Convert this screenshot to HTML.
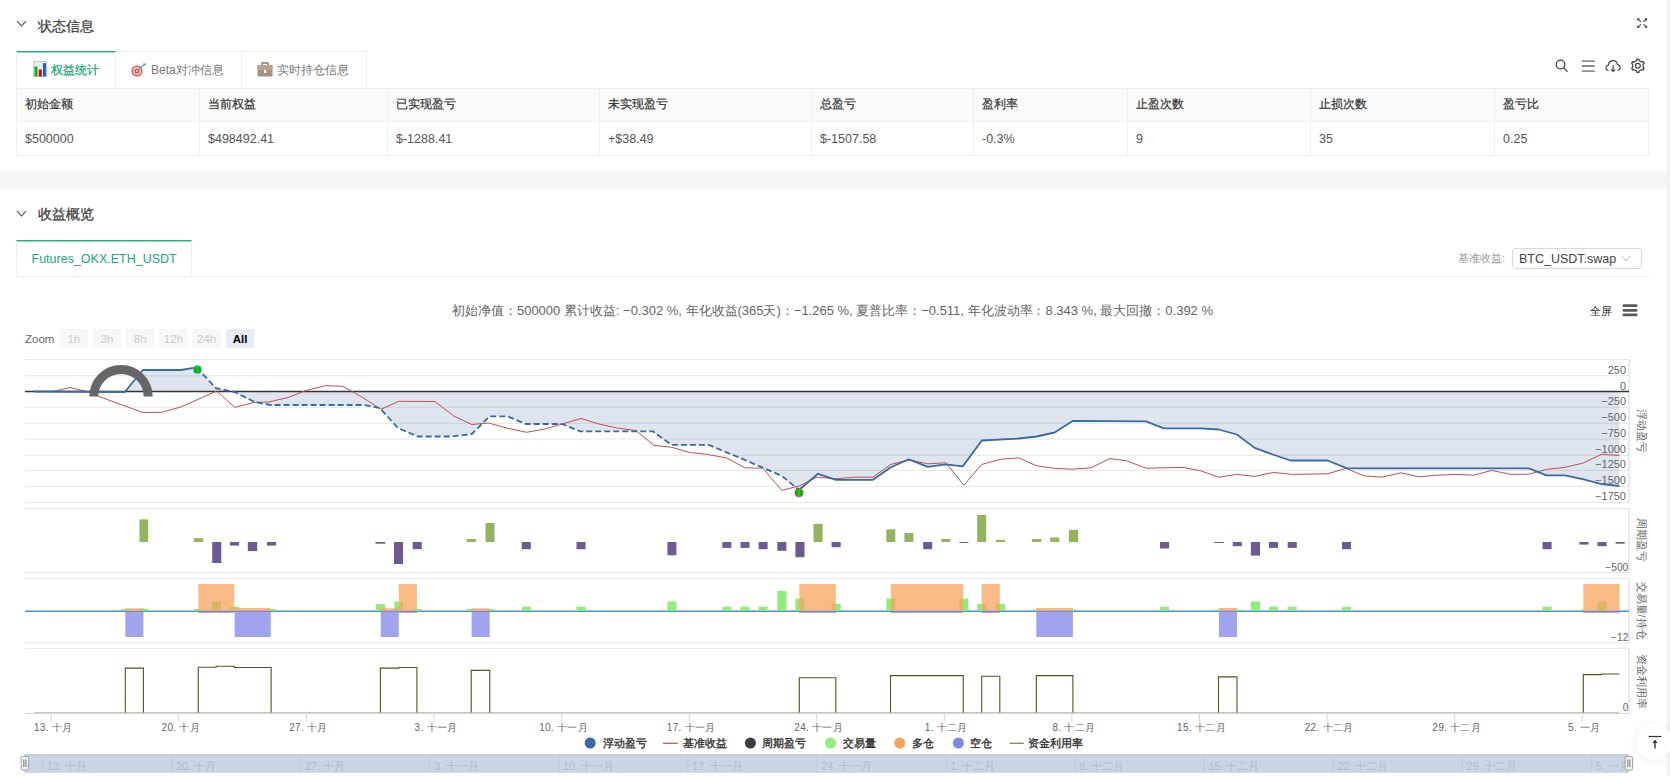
<!DOCTYPE html>
<html><head><meta charset="utf-8">
<style>
html,body{margin:0;padding:0;width:1670px;height:776px;overflow:hidden;background:#f4f5f7;font-family:"Liberation Sans", sans-serif;}
.abs{position:absolute;}
.t{position:absolute;white-space:nowrap;line-height:1;}
</style></head><body>
<div class="abs" style="left:0;top:0;width:1667px;height:171px;background:#fff"></div>
<div class="abs" style="left:0;top:189px;width:1667px;height:587px;background:#fff"></div>
<div class="abs" style="left:1667px;top:0;width:3px;height:776px;background:#f1f2f4"></div>

<svg class="abs" style="left:16px;top:20px" width="12" height="8" viewBox="0 0 12 8"><path d="M1 1.2 L5.5 6 L10 1.2" fill="none" stroke="#555" stroke-width="1.1"/></svg>
<div class="t" style="left:38px;top:19px;font-size:14px;color:#444;font-weight:normal;-webkit-text-stroke:0.3px #444">状态信息</div>
<svg class="abs" style="left:1634px;top:15px" width="16" height="16" viewBox="0 0 16 16">
<g stroke="#444" stroke-width="1.1" fill="none" stroke-linecap="round">
<path d="M4 4 L6.6 6.6"/><path d="M12.4 4 L9.8 6.6"/><path d="M4 12.2 L6.6 9.6"/><path d="M12.4 12.2 L9.8 9.6"/>
</g>
<g fill="#444"><path d="M3.2 3.3 L6 3.5 L3.4 6.1 Z"/><path d="M13.2 3.3 L10.4 3.5 L13 6.1 Z"/><path d="M3.2 13 L6 12.8 L3.4 10.2 Z"/><path d="M13.2 13 L10.4 12.8 L13 10.2 Z"/></g>
</svg>
<div class="abs" style="left:16px;top:51px;width:100px;height:37px;box-sizing:border-box;border-top:1px solid #1fae82;border-left:1px solid #f0f0f0;border-right:1px solid #f0f0f0;background:#fff;box-shadow:inset 0 1px 0 rgba(31,174,130,0.45)"></div>
<div class="abs" style="left:116px;top:51px;width:126px;height:37px;box-sizing:border-box;border:1px solid #f0f0f0;border-left:none;border-bottom:none;background:#fff"></div>
<div class="abs" style="left:242px;top:51px;width:125px;height:37px;box-sizing:border-box;border:1px solid #f0f0f0;border-left:none;border-bottom:none;background:#fff"></div>
<svg class="abs" style="left:33px;top:61px" width="14" height="16" viewBox="0 0 14 16">
<rect x="0.5" y="0.5" width="13" height="15" fill="#e6ecf2" stroke="#b9d6cf" stroke-width="1"/>
<rect x="1.5" y="5.5" width="3" height="10" fill="#11b311"/>
<rect x="5.8" y="8.5" width="3" height="7" fill="#c40a0a"/>
<rect x="10" y="2.2" width="3" height="13.3" fill="#1f5fd0"/>
</svg>
<div class="t" style="left:51px;top:64px;font-size:12px;color:#1aa77a;-webkit-text-stroke:0.25px #1aa77a">权益统计</div>
<svg class="abs" style="left:131px;top:63px" width="16" height="14" viewBox="0 0 16 14">
<circle cx="6" cy="8" r="5.6" fill="#e05c50"/><circle cx="6" cy="8" r="4" fill="#f3d6d0"/><circle cx="6" cy="8" r="2.6" fill="#e05c50"/><circle cx="6" cy="8" r="1.1" fill="#f3d6d0"/>
<path d="M6 8 L13.5 1.5" stroke="#5aa7c0" stroke-width="1.5"/><path d="M12 0.5 L15.5 0.5 L14 3 Z" fill="#5aa7c0"/>
</svg>
<div class="t" style="left:151px;top:64px;font-size:12px;color:#777">Beta对冲信息</div>
<svg class="abs" style="left:257px;top:62px" width="16" height="15" viewBox="0 0 16 15">
<path d="M5 3 L5 1 L11 1 L11 3" fill="none" stroke="#8a7565" stroke-width="1.4"/>
<rect x="0.5" y="3" width="15" height="11.5" rx="1.2" fill="#a89080"/>
<rect x="0.5" y="3" width="15" height="5" rx="1" fill="#b8a292"/>
<rect x="7" y="8" width="2.2" height="3" fill="#fff"/>
</svg>
<div class="t" style="left:277px;top:64px;font-size:12px;color:#777">实时持仓信息</div>
<svg class="abs" style="left:1550px;top:55px" width="100" height="22" viewBox="1550 55 100 22">
<g fill="none" stroke="#444" stroke-width="1.25">
<circle cx="1560.5" cy="64.5" r="4.3"/><path d="M1563.7 67.7 L1567.6 71.9"/>
</g>
<g stroke="#666" stroke-width="1.4"><path d="M1581.8 61.1 H1594.8 M1581.8 66 H1594.8 M1581.8 71.1 H1594.8"/></g>
<g fill="none" stroke="#444" stroke-width="1.2">
<path d="M1608.5 70.5 C1606.5 70.3 1605.8 68.8 1606 67.5 C1606.3 66 1607.6 65.2 1608.4 65.1 C1608.8 62.2 1610.8 60.7 1613 60.7 C1615.4 60.7 1617 62.3 1617.6 64.6 C1619.3 64.9 1620.2 66.3 1620.1 67.8 C1620 69.3 1619 70.4 1617.6 70.5"/>
<path d="M1613.1 65.3 V71.3"/><path d="M1611.1 69.3 L1613.1 71.4 L1615.1 69.3"/>
</g>
<g fill="none" stroke="#444" stroke-width="1.2">
<path d="M1635.25 61.21 L1636.71 60.64 L1636.85 59.18 L1638.95 59.18 L1639.09 60.64 L1640.55 61.21 L1641.78 62.19 L1643.11 61.58 L1644.15 63.40 L1642.97 64.25 L1643.20 65.80 L1642.97 67.35 L1644.15 68.20 L1643.11 70.02 L1641.78 69.41 L1640.55 70.39 L1639.09 70.96 L1638.95 72.42 L1636.85 72.42 L1636.71 70.96 L1635.25 70.39 L1634.02 69.41 L1632.69 70.02 L1631.65 68.20 L1632.83 67.35 L1632.60 65.80 L1632.83 64.25 L1631.65 63.40 L1632.69 61.58 L1634.02 62.19 Z" stroke-linejoin="round"/>
<circle cx="1637.9" cy="65.8" r="2.4"/>
</g>
</svg>
<div class="abs" style="left:16px;top:88px;width:1632px;height:33px;background:#fafafa"></div>
<div class="abs" style="left:16px;top:88px;width:1633px;height:68px;box-sizing:border-box;border:1px solid #f0f0f0"></div>
<div class="abs" style="left:16px;top:121px;width:1632px;height:1px;background:#f0f0f0"></div>
<div class="abs" style="left:199px;top:88px;width:1px;height:67px;background:#f0f0f0"></div>
<div class="abs" style="left:387px;top:88px;width:1px;height:67px;background:#f0f0f0"></div>
<div class="abs" style="left:599px;top:88px;width:1px;height:67px;background:#f0f0f0"></div>
<div class="abs" style="left:811px;top:88px;width:1px;height:67px;background:#f0f0f0"></div>
<div class="abs" style="left:973px;top:88px;width:1px;height:67px;background:#f0f0f0"></div>
<div class="abs" style="left:1127px;top:88px;width:1px;height:67px;background:#f0f0f0"></div>
<div class="abs" style="left:1310px;top:88px;width:1px;height:67px;background:#f0f0f0"></div>
<div class="abs" style="left:1494px;top:88px;width:1px;height:67px;background:#f0f0f0"></div>
<div class="t" style="left:25px;top:99px;font-size:11.5px;color:#333;-webkit-text-stroke:0.2px #333">初始金额</div>
<div class="t" style="left:25px;top:133px;font-size:12.5px;color:#555">$500000</div>
<div class="t" style="left:208px;top:99px;font-size:11.5px;color:#333;-webkit-text-stroke:0.2px #333">当前权益</div>
<div class="t" style="left:208px;top:133px;font-size:12.5px;color:#555">$498492.41</div>
<div class="t" style="left:396px;top:99px;font-size:11.5px;color:#333;-webkit-text-stroke:0.2px #333">已实现盈亏</div>
<div class="t" style="left:396px;top:133px;font-size:12.5px;color:#555">$-1288.41</div>
<div class="t" style="left:608px;top:99px;font-size:11.5px;color:#333;-webkit-text-stroke:0.2px #333">未实现盈亏</div>
<div class="t" style="left:608px;top:133px;font-size:12.5px;color:#555">+$38.49</div>
<div class="t" style="left:820px;top:99px;font-size:11.5px;color:#333;-webkit-text-stroke:0.2px #333">总盈亏</div>
<div class="t" style="left:820px;top:133px;font-size:12.5px;color:#555">$-1507.58</div>
<div class="t" style="left:982px;top:99px;font-size:11.5px;color:#333;-webkit-text-stroke:0.2px #333">盈利率</div>
<div class="t" style="left:982px;top:133px;font-size:12.5px;color:#555">-0.3%</div>
<div class="t" style="left:1136px;top:99px;font-size:11.5px;color:#333;-webkit-text-stroke:0.2px #333">止盈次数</div>
<div class="t" style="left:1136px;top:133px;font-size:12.5px;color:#555">9</div>
<div class="t" style="left:1319px;top:99px;font-size:11.5px;color:#333;-webkit-text-stroke:0.2px #333">止损次数</div>
<div class="t" style="left:1319px;top:133px;font-size:12.5px;color:#555">35</div>
<div class="t" style="left:1503px;top:99px;font-size:11.5px;color:#333;-webkit-text-stroke:0.2px #333">盈亏比</div>
<div class="t" style="left:1503px;top:133px;font-size:12.5px;color:#555">0.25</div>
<svg class="abs" style="left:16px;top:210px" width="12" height="8" viewBox="0 0 12 8"><path d="M1 1.2 L5.5 6 L10 1.2" fill="none" stroke="#555" stroke-width="1.1"/></svg>
<div class="t" style="left:38px;top:207px;font-size:14px;color:#444;font-weight:normal;-webkit-text-stroke:0.3px #444">收益概览</div>
<div class="abs" style="left:16px;top:240px;width:176px;height:37px;box-sizing:border-box;border-top:1px solid #1fae82;border-left:1px solid #f0f0f0;border-right:1px solid #f0f0f0;background:#fff;box-shadow:inset 0 1px 0 rgba(31,174,130,0.45)"></div>
<div class="abs" style="left:16px;top:276px;width:1633px;height:1px;background:#f0f0f0"></div>
<div class="t" style="left:31.5px;top:253px;font-size:12.5px;color:#1aa77a">Futures_OKX.ETH_USDT</div>
<div class="t" style="left:1458px;top:253px;font-size:11px;color:#999">基准收益:</div>
<div class="abs" style="left:1512px;top:248px;width:130px;height:21px;box-sizing:border-box;border:1px solid #d9d9d9;border-radius:3px;background:#fff"></div>
<div class="t" style="left:1519px;top:253px;font-size:12.5px;color:#444">BTC_USDT.swap</div>
<svg class="abs" style="left:1621px;top:255px" width="11" height="8" viewBox="0 0 11 8"><path d="M0.8 0.8 L5 6 L9.4 0.8" fill="none" stroke="#bbb" stroke-width="1"/></svg>
<svg class="abs" style="left:0;top:0" width="1670" height="776" viewBox="0 0 1670 776">
<text x="452" y="314.5" textLength="761" lengthAdjust="spacing" font-family='"Liberation Sans", sans-serif' font-size="13" fill="#666">初始净值：500000 累计收益: −0.302 %, 年化收益(365天)：−1.265 %, 夏普比率：−0.511, 年化波动率：8.343 %, 最大回撤：0.392 %</text>
<text x="1590" y="314.6" font-family='"Liberation Sans", sans-serif' font-size="10.5" fill="#333">全屏</text>
<g stroke="#5a5a5a" stroke-width="2.7" stroke-linecap="round"><path d="M1623.8 305.6 H1636.2 M1623.8 310.3 H1636.2 M1623.8 314.9 H1636.2"/></g>
<text x="25" y="343" font-family='"Liberation Sans", sans-serif' font-size="11.5" fill="#666">Zoom</text>
<rect x="59.7" y="329" width="28.3" height="19.3" rx="2" fill="#f7f7f7"/>
<text x="73.85000000000001" y="343" text-anchor="middle" font-family='"Liberation Sans", sans-serif' font-size="11.5" font-weight="normal" fill="#ccc">1h</text>
<rect x="92.8" y="329" width="28.3" height="19.3" rx="2" fill="#f7f7f7"/>
<text x="106.95" y="343" text-anchor="middle" font-family='"Liberation Sans", sans-serif' font-size="11.5" font-weight="normal" fill="#ccc">3h</text>
<rect x="126" y="329" width="28.3" height="19.3" rx="2" fill="#f7f7f7"/>
<text x="140.15" y="343" text-anchor="middle" font-family='"Liberation Sans", sans-serif' font-size="11.5" font-weight="normal" fill="#ccc">8h</text>
<rect x="159.3" y="329" width="28.3" height="19.3" rx="2" fill="#f7f7f7"/>
<text x="173.45000000000002" y="343" text-anchor="middle" font-family='"Liberation Sans", sans-serif' font-size="11.5" font-weight="normal" fill="#ccc">12h</text>
<rect x="192.5" y="329" width="28.3" height="19.3" rx="2" fill="#f7f7f7"/>
<text x="206.65" y="343" text-anchor="middle" font-family='"Liberation Sans", sans-serif' font-size="11.5" font-weight="normal" fill="#ccc">24h</text>
<rect x="226" y="329" width="28.3" height="19.3" rx="2" fill="#e6ebf5"/>
<text x="240.15" y="343" text-anchor="middle" font-family='"Liberation Sans", sans-serif' font-size="11.5" font-weight="bold" fill="#000">All</text>
<line x1="25" y1="359.5" x2="1629" y2="359.5" stroke="#e6e6e6" stroke-width="1"/>
<line x1="25" y1="375.8" x2="1629" y2="375.8" stroke="#e6e6e6" stroke-width="1"/>
<line x1="25" y1="391.5" x2="1629" y2="391.5" stroke="#e6e6e6" stroke-width="1"/>
<line x1="25" y1="407.3" x2="1629" y2="407.3" stroke="#e6e6e6" stroke-width="1"/>
<line x1="25" y1="423.3" x2="1629" y2="423.3" stroke="#e6e6e6" stroke-width="1"/>
<line x1="25" y1="439.1" x2="1629" y2="439.1" stroke="#e6e6e6" stroke-width="1"/>
<line x1="25" y1="455.3" x2="1629" y2="455.3" stroke="#e6e6e6" stroke-width="1"/>
<line x1="25" y1="470.4" x2="1629" y2="470.4" stroke="#e6e6e6" stroke-width="1"/>
<line x1="25" y1="486.4" x2="1629" y2="486.4" stroke="#e6e6e6" stroke-width="1"/>
<line x1="25" y1="502.4" x2="1629" y2="502.4" stroke="#e6e6e6" stroke-width="1"/>
<line x1="25" y1="508.4" x2="1629" y2="508.4" stroke="#e6e6e6" stroke-width="1"/>
<line x1="25" y1="572.6" x2="1629" y2="572.6" stroke="#e6e6e6" stroke-width="1"/>
<line x1="25" y1="578.4" x2="1629" y2="578.4" stroke="#e6e6e6" stroke-width="1"/>
<line x1="25" y1="642.8" x2="1629" y2="642.8" stroke="#e6e6e6" stroke-width="1"/>
<line x1="25" y1="648.3" x2="1629" y2="648.3" stroke="#e6e6e6" stroke-width="1"/>
<line x1="1629" y1="359.5" x2="1629" y2="502.4" stroke="#ccd6eb" stroke-width="1"/>
<line x1="1629" y1="508.4" x2="1629" y2="572.6" stroke="#ccd6eb" stroke-width="1"/>
<line x1="1629" y1="578.4" x2="1629" y2="642.8" stroke="#ccd6eb" stroke-width="1"/>
<line x1="1629" y1="648.3" x2="1629" y2="713" stroke="#ccd6eb" stroke-width="1"/>
<polygon points="34,391.5 34,391.5 124.8,392 142.8,370 180.8,370 196.7,367.4 215.7,388 234.7,392 254.7,402 270.6,405 363.9,405 379.9,408 397.8,428 417.8,436.5 451.8,436.5 471.7,434 489.7,416.3 507.7,416.3 525.7,424 562,424 580,431.3 652.9,431.3 671.8,444.9 708.8,444.9 744.7,459.9 781.7,475.8 799,490 818,473.8 836,479.8 872.9,479.8 890.9,467.2 908.9,459.3 927.8,466.8 945.8,464.4 962.8,466.4 981.8,440.5 1018.7,438.5 1036.7,436.5 1054.7,432.5 1072.6,420.9 1145.9,421.3 1163.9,428.3 1200.8,428.3 1218.8,429.5 1236.8,434.5 1254.7,447.9 1272.7,454.5 1290.7,460.5 1327.6,460.5 1347,468.4 1528.7,468.4 1546.7,475.4 1564.7,475.4 1582.7,479.2 1601.6,484.2 1619.5,486 1619.5,391.5" fill="#5f7daa" fill-opacity="0.2"/>
<line x1="25" y1="391.5" x2="1629" y2="391.5" stroke="#333" stroke-width="1.6"/>
<polyline points="53,391.5 70,387.5 89,392 99,396.5 142.8,412.5 161.8,412.3 180.8,407 216.7,391 234.7,407.3 254.7,402.3 268.6,402 288,397.5 306,390.5 326,385.6 342.9,386.4 361.9,397 380.9,409.3 398.8,401.3 434.8,401.5 453.8,416 471.7,424.5 488.7,423 507.7,428.3 526.7,432.3 545,429 581,418.5 598.9,424 616.9,428 635.9,430.5 653.8,445.3 671.8,447.3 689.8,452.5 707.8,454.5 726.7,457.9 744.7,467.8 762.7,468.2 781.7,490.4 799.6,485.8 817,477.2 836,478.8 853.9,477.2 872.9,477.2 890.9,464.4 908.9,459.9 927.8,463.8 945.8,462.8 963.8,485.2 981.8,464.4 1000.7,459.3 1018.7,457.9 1036.7,465.8 1054.7,468.4 1072.6,469.2 1091,467.8 1110,458.5 1126.9,460.9 1145.9,468.2 1182.8,467.4 1200.8,470.8 1218.8,477.2 1236.8,474.4 1254.7,476.4 1273.7,472.4 1291.7,474.4 1327.6,473.8 1346,468.4 1364,475.8 1382,477.2 1400.9,472.8 1418.9,476.8 1436.9,475.2 1455.8,474.4 1473.8,475.2 1491.8,470.4 1510.8,474.4 1528.7,474.2 1546.7,469.4 1564.7,467.4 1582.7,463.2 1601.6,454.3 1619.5,455.5" fill="none" stroke="#c0504d" stroke-width="1" stroke-linejoin="round"/>
<polyline points="34,391.5 124.8,392 142.8,370 180.8,370 196.7,367.4" fill="none" stroke="#3a6aa5" stroke-width="1.8" stroke-linejoin="round"/>
<polyline points="196.7,367.4 215.7,388 234.7,392 254.7,402 270.6,405 363.9,405 379.9,408 397.8,428 417.8,436.5 451.8,436.5 471.7,434 489.7,416.3 507.7,416.3 525.7,424 562,424 580,431.3 652.9,431.3 671.8,444.9 708.8,444.9 744.7,459.9 781.7,475.8 799,490" fill="none" stroke="#3a6aa5" stroke-width="1.8" stroke-dasharray="6,3" stroke-linejoin="round"/>
<polyline points="799,490 818,473.8 836,479.8 872.9,479.8 890.9,467.2 908.9,459.3 927.8,466.8 945.8,464.4 962.8,466.4 981.8,440.5 1018.7,438.5 1036.7,436.5 1054.7,432.5 1072.6,420.9 1145.9,421.3 1163.9,428.3 1200.8,428.3 1218.8,429.5 1236.8,434.5 1254.7,447.9 1272.7,454.5 1290.7,460.5 1327.6,460.5 1347,468.4 1528.7,468.4 1546.7,475.4 1564.7,475.4 1582.7,479.2 1601.6,484.2 1619.5,486" fill="none" stroke="#3a6aa5" stroke-width="1.8" stroke-linejoin="round"/>
<circle cx="197.4" cy="369.7" r="4.1" fill="#00b900" stroke="#8fb3f0" stroke-width="0.7"/><line x1="197.4" y1="367" x2="197.4" y2="373.5" stroke="#7fb0c8" stroke-width="0.6"/>
<circle cx="799" cy="492.8" r="4.1" fill="#00b900" stroke="#d9534f" stroke-width="0.8"/><line x1="799" y1="490" x2="799" y2="496.5" stroke="#c8b090" stroke-width="0.6"/>
<path d="M93.8 396.6 A27.2 27.2 0 0 1 148.2 396.6" fill="none" stroke="#666" stroke-width="9"/>
<text x="1626" y="373.8" text-anchor="end" font-family='"Liberation Sans", sans-serif' font-size="11" fill="#666">250</text>
<text x="1626" y="389.5" text-anchor="end" font-family='"Liberation Sans", sans-serif' font-size="11" fill="#666">0</text>
<text x="1626" y="405.3" text-anchor="end" font-family='"Liberation Sans", sans-serif' font-size="11" fill="#666">−250</text>
<text x="1626" y="421.3" text-anchor="end" font-family='"Liberation Sans", sans-serif' font-size="11" fill="#666">−500</text>
<text x="1626" y="437.1" text-anchor="end" font-family='"Liberation Sans", sans-serif' font-size="11" fill="#666">−750</text>
<text x="1626" y="453.3" text-anchor="end" font-family='"Liberation Sans", sans-serif' font-size="11" fill="#666">−1000</text>
<text x="1626" y="468.4" text-anchor="end" font-family='"Liberation Sans", sans-serif' font-size="11" fill="#666">−1250</text>
<text x="1626" y="484.4" text-anchor="end" font-family='"Liberation Sans", sans-serif' font-size="11" fill="#666">−1500</text>
<text x="1626" y="500.4" text-anchor="end" font-family='"Liberation Sans", sans-serif' font-size="11" fill="#666">−1750</text>
<text transform="translate(1638.3,430.9) rotate(90)" text-anchor="middle" font-family='"Liberation Sans", sans-serif' font-size="10.7" fill="#666">浮动盈亏</text>
<text transform="translate(1638.3,539.5) rotate(90)" text-anchor="middle" font-family='"Liberation Sans", sans-serif' font-size="10.7" fill="#666">周期盈亏</text>
<text transform="translate(1638.3,610.6) rotate(90)" text-anchor="middle" font-family='"Liberation Sans", sans-serif' font-size="10.7" fill="#666">交易量/持仓</text>
<text transform="translate(1638.3,681.5) rotate(90)" text-anchor="middle" font-family='"Liberation Sans", sans-serif' font-size="10.7" fill="#666">资金利用率</text>
<text x="1628.3" y="570.9" text-anchor="end" font-family='"Liberation Sans", sans-serif' font-size="10.2" fill="#666">−500</text>
<text x="1628.3" y="641" text-anchor="end" font-family='"Liberation Sans", sans-serif' font-size="10.2" fill="#666">−12</text>
<text x="1628.3" y="711.3" text-anchor="end" font-family='"Liberation Sans", sans-serif' font-size="10.2" fill="#666">0</text>
<rect x="139.5" y="519.4" width="8.699999999999989" height="22.600000000000023" fill="#93b35e"/>
<rect x="193.8" y="538.2" width="9.399999999999977" height="3.7999999999999545" fill="#93b35e"/>
<rect x="466.7" y="539" width="9.100000000000023" height="3" fill="#93b35e"/>
<rect x="485.5" y="523" width="9.0" height="19" fill="#93b35e"/>
<rect x="813.5" y="523.9" width="9.100000000000023" height="18.100000000000023" fill="#93b35e"/>
<rect x="886.3" y="529.4" width="9.0" height="12.600000000000023" fill="#93b35e"/>
<rect x="904.4" y="533" width="9.0" height="9" fill="#93b35e"/>
<rect x="941.3" y="539" width="9.0" height="3" fill="#93b35e"/>
<rect x="977.2" y="514.9" width="9.0" height="27.100000000000023" fill="#93b35e"/>
<rect x="995.9" y="539.8" width="9.100000000000023" height="2.2000000000000455" fill="#93b35e"/>
<rect x="1032.1" y="539" width="9.100000000000136" height="3" fill="#93b35e"/>
<rect x="1050.2" y="537.5" width="9.099999999999909" height="4.5" fill="#93b35e"/>
<rect x="1069" y="530" width="9" height="12" fill="#93b35e"/>
<rect x="212.2" y="542" width="9.100000000000023" height="21" fill="#6e5a92"/>
<rect x="230" y="542" width="9.099999999999994" height="3.6000000000000227" fill="#6e5a92"/>
<rect x="247.8" y="542" width="9.399999999999977" height="9.100000000000023" fill="#6e5a92"/>
<rect x="266.9" y="542" width="9.100000000000023" height="3.6000000000000227" fill="#6e5a92"/>
<rect x="375.5" y="542" width="9.699999999999989" height="1.7000000000000455" fill="#6e5a92"/>
<rect x="394" y="542" width="9" height="22" fill="#6e5a92"/>
<rect x="412.7" y="542" width="9.100000000000023" height="7.2000000000000455" fill="#6e5a92"/>
<rect x="521.7" y="542" width="9.099999999999909" height="7.2000000000000455" fill="#6e5a92"/>
<rect x="576.5" y="542" width="9.100000000000023" height="7.2000000000000455" fill="#6e5a92"/>
<rect x="667.4" y="542" width="9.0" height="13.299999999999955" fill="#6e5a92"/>
<rect x="722.3" y="542" width="9.100000000000023" height="5.899999999999977" fill="#6e5a92"/>
<rect x="740.5" y="542" width="9.0" height="5.899999999999977" fill="#6e5a92"/>
<rect x="758.6" y="542" width="9.0" height="7.2000000000000455" fill="#6e5a92"/>
<rect x="777.3" y="542" width="9.100000000000023" height="8.799999999999955" fill="#6e5a92"/>
<rect x="795.4" y="542" width="9.100000000000023" height="15.200000000000045" fill="#6e5a92"/>
<rect x="831.6" y="542" width="9.100000000000023" height="5.2000000000000455" fill="#6e5a92"/>
<rect x="923.2" y="542" width="9.0" height="7.2000000000000455" fill="#6e5a92"/>
<rect x="959.4" y="542" width="9.0" height="1" fill="#6e5a92"/>
<rect x="1160" y="542" width="9.099999999999909" height="6.5" fill="#6e5a92"/>
<rect x="1214.3" y="542" width="9.700000000000045" height="1" fill="#6e5a92"/>
<rect x="1232.8" y="542" width="9.0" height="4.2000000000000455" fill="#6e5a92"/>
<rect x="1250.9" y="542" width="9.099999999999909" height="13.600000000000023" fill="#6e5a92"/>
<rect x="1269" y="542" width="9" height="5.899999999999977" fill="#6e5a92"/>
<rect x="1287.7" y="542" width="9.099999999999909" height="5.899999999999977" fill="#6e5a92"/>
<rect x="1342" y="542" width="9" height="7.2000000000000455" fill="#6e5a92"/>
<rect x="1542.5" y="542" width="9.099999999999909" height="7.2000000000000455" fill="#6e5a92"/>
<rect x="1579.4" y="542" width="9.099999999999909" height="2.6000000000000227" fill="#6e5a92"/>
<rect x="1597.5" y="542" width="9.099999999999909" height="4.2000000000000455" fill="#6e5a92"/>
<rect x="1615.6" y="542" width="9.100000000000136" height="1.7000000000000455" fill="#6e5a92"/>
<line x1="25" y1="611.2" x2="1629" y2="611.2" stroke="#4a90d2" stroke-width="1.5"/>
<rect x="212" y="601.5" width="9" height="9.5" fill="#90ed7d"/>
<rect x="230" y="606.7" width="9.099999999999994" height="4.2999999999999545" fill="#90ed7d"/>
<rect x="121" y="609" width="9" height="2" fill="#90ed7d"/>
<rect x="139.5" y="608.7" width="8.699999999999989" height="2.2999999999999545" fill="#90ed7d"/>
<rect x="193.8" y="609" width="9.399999999999977" height="2" fill="#90ed7d"/>
<rect x="266.9" y="609" width="9.100000000000023" height="2" fill="#90ed7d"/>
<rect x="376" y="604" width="9" height="7" fill="#90ed7d"/>
<rect x="394.3" y="601.5" width="8.699999999999989" height="9.5" fill="#90ed7d"/>
<rect x="412.7" y="609" width="9.100000000000023" height="2" fill="#90ed7d"/>
<rect x="466.7" y="609" width="9.100000000000023" height="2" fill="#90ed7d"/>
<rect x="485.5" y="609" width="9.0" height="2" fill="#90ed7d"/>
<rect x="522" y="606.7" width="8.799999999999955" height="4.2999999999999545" fill="#90ed7d"/>
<rect x="576.5" y="606.7" width="9.100000000000023" height="4.2999999999999545" fill="#90ed7d"/>
<rect x="667.4" y="601.5" width="9.0" height="9.5" fill="#90ed7d"/>
<rect x="722.3" y="606.7" width="9.100000000000023" height="4.2999999999999545" fill="#90ed7d"/>
<rect x="740.5" y="606.7" width="9.0" height="4.2999999999999545" fill="#90ed7d"/>
<rect x="758.6" y="606.7" width="9.0" height="4.2999999999999545" fill="#90ed7d"/>
<rect x="777.3" y="590.9" width="9.100000000000023" height="20.100000000000023" fill="#90ed7d"/>
<rect x="795.4" y="598.6" width="9.100000000000023" height="12.399999999999977" fill="#90ed7d"/>
<rect x="831.6" y="603.8" width="9.100000000000023" height="7.2000000000000455" fill="#90ed7d"/>
<rect x="886.3" y="598.6" width="9.0" height="12.399999999999977" fill="#90ed7d"/>
<rect x="959.4" y="598.6" width="9.0" height="12.399999999999977" fill="#90ed7d"/>
<rect x="977.2" y="603.8" width="9.0" height="7.2000000000000455" fill="#90ed7d"/>
<rect x="995.9" y="603.8" width="9.100000000000023" height="7.2000000000000455" fill="#90ed7d"/>
<rect x="1032.1" y="609.5" width="9.100000000000136" height="1.5" fill="#90ed7d"/>
<rect x="1069" y="609.5" width="9" height="1.5" fill="#90ed7d"/>
<rect x="1160" y="606.7" width="9.099999999999909" height="4.2999999999999545" fill="#90ed7d"/>
<rect x="1214.3" y="609.5" width="9.700000000000045" height="1.5" fill="#90ed7d"/>
<rect x="1232.8" y="609.5" width="9.0" height="1.5" fill="#90ed7d"/>
<rect x="1250.9" y="601.5" width="9.099999999999909" height="9.5" fill="#90ed7d"/>
<rect x="1269" y="606.7" width="9" height="4.2999999999999545" fill="#90ed7d"/>
<rect x="1287.7" y="606.7" width="9.099999999999909" height="4.2999999999999545" fill="#90ed7d"/>
<rect x="1342" y="606.7" width="9" height="4.2999999999999545" fill="#90ed7d"/>
<rect x="1542.5" y="606.7" width="9.099999999999909" height="4.2999999999999545" fill="#90ed7d"/>
<rect x="1579.4" y="609.5" width="9.099999999999909" height="1.5" fill="#90ed7d"/>
<rect x="1597.5" y="601.5" width="9.099999999999909" height="9.5" fill="#90ed7d"/>
<rect x="198.3" y="584" width="35.89999999999998" height="27" fill="#f7a35c" fill-opacity="0.75"/>
<rect x="125.3" y="608.3" width="18.10000000000001" height="2.7000000000000455" fill="#f7a35c" fill-opacity="0.75"/>
<rect x="234.2" y="608" width="36.60000000000002" height="3" fill="#f7a35c" fill-opacity="0.75"/>
<rect x="398.8" y="584" width="18.099999999999966" height="27" fill="#f7a35c" fill-opacity="0.75"/>
<rect x="380.7" y="608.3" width="18.100000000000023" height="2.7000000000000455" fill="#f7a35c" fill-opacity="0.75"/>
<rect x="471.6" y="608.3" width="18.099999999999966" height="2.7000000000000455" fill="#f7a35c" fill-opacity="0.75"/>
<rect x="799.3" y="584" width="36.5" height="27" fill="#f7a35c" fill-opacity="0.75"/>
<rect x="890.8" y="584" width="72.40000000000009" height="27" fill="#f7a35c" fill-opacity="0.75"/>
<rect x="981.7" y="584" width="18.09999999999991" height="27" fill="#f7a35c" fill-opacity="0.75"/>
<rect x="1036.3" y="608" width="36.600000000000136" height="3" fill="#f7a35c" fill-opacity="0.75"/>
<rect x="1218.9" y="608" width="18.09999999999991" height="3" fill="#f7a35c" fill-opacity="0.75"/>
<rect x="1583.3" y="584" width="36.200000000000045" height="27" fill="#f7a35c" fill-opacity="0.75"/>
<rect x="125.3" y="611" width="18.10000000000001" height="26" fill="#8085e9" fill-opacity="0.75"/>
<rect x="234.6" y="611" width="36.20000000000002" height="26" fill="#8085e9" fill-opacity="0.75"/>
<rect x="380.7" y="611" width="18.100000000000023" height="26" fill="#8085e9" fill-opacity="0.75"/>
<rect x="471.6" y="611" width="18.099999999999966" height="26" fill="#8085e9" fill-opacity="0.75"/>
<rect x="1036.3" y="611" width="36.600000000000136" height="26" fill="#8085e9" fill-opacity="0.75"/>
<rect x="1218.9" y="611" width="18.09999999999991" height="26" fill="#8085e9" fill-opacity="0.75"/>
<rect x="198.3" y="611" width="35.89999999999998" height="2" fill="#8085e9" fill-opacity="0.75"/>
<rect x="398.8" y="611" width="18.099999999999966" height="2" fill="#8085e9" fill-opacity="0.75"/>
<rect x="799.3" y="611" width="36.5" height="2" fill="#8085e9" fill-opacity="0.75"/>
<rect x="890.8" y="611" width="72.40000000000009" height="2" fill="#8085e9" fill-opacity="0.75"/>
<rect x="981.7" y="611" width="18.09999999999991" height="2" fill="#8085e9" fill-opacity="0.75"/>
<rect x="1583.3" y="611" width="36.200000000000045" height="2" fill="#8085e9" fill-opacity="0.75"/>
<line x1="34" y1="712.5" x2="1619.5" y2="712.5" stroke="#cfc7aa" stroke-width="1.2"/>
<polyline points="125.3,712.5 125.3,668.1 143.4,668.1 143.4,712.5" fill="none" stroke="#5e4f22" stroke-width="1.1"/>
<polyline points="198.3,712.5 198.3,667.2 216.1,667.2 216.1,666.2 234.2,666.2 234.2,667.5 271.1,667.5 271.1,712.5" fill="none" stroke="#5e4f22" stroke-width="1.1"/>
<polyline points="380.4,712.5 380.4,668.1 398.8,668.1 398.8,667.5 416.9,667.5 416.9,712.5" fill="none" stroke="#5e4f22" stroke-width="1.1"/>
<polyline points="471.2,712.5 471.2,670.4 489.7,670.4 489.7,712.5" fill="none" stroke="#5e4f22" stroke-width="1.1"/>
<polyline points="799.3,712.5 799.3,677.8 835.8,677.8 835.8,712.5" fill="none" stroke="#5e4f22" stroke-width="1.1"/>
<polyline points="890.5,712.5 890.5,675.6 963.2,675.6 963.2,712.5" fill="none" stroke="#5e4f22" stroke-width="1.1"/>
<polyline points="981.7,712.5 981.7,676.2 999.8,676.2 999.8,712.5" fill="none" stroke="#5e4f22" stroke-width="1.1"/>
<polyline points="1036.3,712.5 1036.3,675.6 1072.9,675.6 1072.9,712.5" fill="none" stroke="#5e4f22" stroke-width="1.1"/>
<polyline points="1218.5,712.5 1218.5,676.9 1237,676.9 1237,712.5" fill="none" stroke="#5e4f22" stroke-width="1.1"/>
<polyline points="1583.3,712.5 1583.3,674.6 1601.4,674.6 1601.4,674 1619.5,674" fill="none" stroke="#5e4f22" stroke-width="1.1"/>
<line x1="25" y1="713.5" x2="1629" y2="713.5" stroke="#ccd6eb" stroke-width="1"/>
<line x1="51.2" y1="713" x2="51.2" y2="721.5" stroke="#ccd6eb" stroke-width="1"/>
<text x="53.2" y="730.5" text-anchor="middle" font-family='"Liberation Sans", sans-serif' font-size="10" letter-spacing="0.3" fill="#666">13. 十月</text>
<line x1="178.8" y1="713" x2="178.8" y2="721.5" stroke="#ccd6eb" stroke-width="1"/>
<text x="180.8" y="730.5" text-anchor="middle" font-family='"Liberation Sans", sans-serif' font-size="10" letter-spacing="0.3" fill="#666">20. 十月</text>
<line x1="306.4" y1="713" x2="306.4" y2="721.5" stroke="#ccd6eb" stroke-width="1"/>
<text x="308.4" y="730.5" text-anchor="middle" font-family='"Liberation Sans", sans-serif' font-size="10" letter-spacing="0.3" fill="#666">27. 十月</text>
<line x1="434.0" y1="713" x2="434.0" y2="721.5" stroke="#ccd6eb" stroke-width="1"/>
<text x="436.0" y="730.5" text-anchor="middle" font-family='"Liberation Sans", sans-serif' font-size="10" letter-spacing="0.3" fill="#666">3. 十一月</text>
<line x1="561.6" y1="713" x2="561.6" y2="721.5" stroke="#ccd6eb" stroke-width="1"/>
<text x="563.6" y="730.5" text-anchor="middle" font-family='"Liberation Sans", sans-serif' font-size="10" letter-spacing="0.3" fill="#666">10. 十一月</text>
<line x1="689.2" y1="713" x2="689.2" y2="721.5" stroke="#ccd6eb" stroke-width="1"/>
<text x="691.2" y="730.5" text-anchor="middle" font-family='"Liberation Sans", sans-serif' font-size="10" letter-spacing="0.3" fill="#666">17. 十一月</text>
<line x1="816.7" y1="713" x2="816.7" y2="721.5" stroke="#ccd6eb" stroke-width="1"/>
<text x="818.7" y="730.5" text-anchor="middle" font-family='"Liberation Sans", sans-serif' font-size="10" letter-spacing="0.3" fill="#666">24. 十一月</text>
<line x1="944.3" y1="713" x2="944.3" y2="721.5" stroke="#ccd6eb" stroke-width="1"/>
<text x="946.3" y="730.5" text-anchor="middle" font-family='"Liberation Sans", sans-serif' font-size="10" letter-spacing="0.3" fill="#666">1. 十二月</text>
<line x1="1071.9" y1="713" x2="1071.9" y2="721.5" stroke="#ccd6eb" stroke-width="1"/>
<text x="1073.9" y="730.5" text-anchor="middle" font-family='"Liberation Sans", sans-serif' font-size="10" letter-spacing="0.3" fill="#666">8. 十二月</text>
<line x1="1199.5" y1="713" x2="1199.5" y2="721.5" stroke="#ccd6eb" stroke-width="1"/>
<text x="1201.5" y="730.5" text-anchor="middle" font-family='"Liberation Sans", sans-serif' font-size="10" letter-spacing="0.3" fill="#666">15. 十二月</text>
<line x1="1327.1" y1="713" x2="1327.1" y2="721.5" stroke="#ccd6eb" stroke-width="1"/>
<text x="1329.1" y="730.5" text-anchor="middle" font-family='"Liberation Sans", sans-serif' font-size="10" letter-spacing="0.3" fill="#666">22. 十二月</text>
<line x1="1454.7" y1="713" x2="1454.7" y2="721.5" stroke="#ccd6eb" stroke-width="1"/>
<text x="1456.7" y="730.5" text-anchor="middle" font-family='"Liberation Sans", sans-serif' font-size="10" letter-spacing="0.3" fill="#666">29. 十二月</text>
<line x1="1582.3" y1="713" x2="1582.3" y2="721.5" stroke="#ccd6eb" stroke-width="1"/>
<text x="1584.3" y="730.5" text-anchor="middle" font-family='"Liberation Sans", sans-serif' font-size="10" letter-spacing="0.3" fill="#666">5. 一月</text>
<circle cx="590.2" cy="743" r="5.5" fill="#3a6aa5"/>
<text x="602.5" y="746.8" font-family='"Liberation Sans", sans-serif' font-size="10.6" font-weight="normal" stroke="#333" stroke-width="0.35" fill="#333">浮动盈亏</text>
<line x1="663" y1="743.3" x2="677.7" y2="743.3" stroke="#c0504d" stroke-width="1.2"/>
<text x="682.5" y="746.8" font-family='"Liberation Sans", sans-serif' font-size="10.6" font-weight="normal" stroke="#333" stroke-width="0.35" fill="#333">基准收益</text>
<circle cx="750.4" cy="743" r="5.5" fill="#3d3d44"/>
<text x="762.2" y="746.8" font-family='"Liberation Sans", sans-serif' font-size="10.6" font-weight="normal" stroke="#333" stroke-width="0.35" fill="#333">周期盈亏</text>
<circle cx="830.5" cy="743" r="5.5" fill="#90ed7d"/>
<text x="842.6" y="746.8" font-family='"Liberation Sans", sans-serif' font-size="10.6" font-weight="normal" stroke="#333" stroke-width="0.35" fill="#333">交易量</text>
<circle cx="899.7" cy="743" r="5.5" fill="#f7a35c"/>
<text x="911.8" y="746.8" font-family='"Liberation Sans", sans-serif' font-size="10.6" font-weight="normal" stroke="#333" stroke-width="0.35" fill="#333">多仓</text>
<circle cx="958.4" cy="743" r="5.5" fill="#8085e9"/>
<text x="970" y="746.8" font-family='"Liberation Sans", sans-serif' font-size="10.6" font-weight="normal" stroke="#333" stroke-width="0.35" fill="#333">空仓</text>
<line x1="1009.6" y1="743.3" x2="1023.8" y2="743.3" stroke="#8a7a3e" stroke-width="1.2"/>
<text x="1028.4" y="746.8" font-family='"Liberation Sans", sans-serif' font-size="10.6" font-weight="normal" stroke="#333" stroke-width="0.35" fill="#333">资金利用率</text>
<rect x="24.2" y="754.5" width="1604.5" height="18.5" fill="#c8d5e5"/>
<line x1="24.2" y1="754.8" x2="1628.7" y2="754.8" stroke="#b9c0ca" stroke-width="1"/>
<line x1="24.2" y1="772.6" x2="1628.7" y2="772.6" stroke="#d6dbe2" stroke-width="1"/>
<line x1="42.6" y1="755" x2="42.6" y2="772.5" stroke="#bccadb" stroke-width="1"/>
<text x="47.0" y="769.5" font-family='"Liberation Sans", sans-serif' font-size="10.6" fill="#b2bece">13. 十月</text>
<line x1="171.7" y1="755" x2="171.7" y2="772.5" stroke="#bccadb" stroke-width="1"/>
<text x="176.1" y="769.5" font-family='"Liberation Sans", sans-serif' font-size="10.6" fill="#b2bece">20. 十月</text>
<line x1="300.7" y1="755" x2="300.7" y2="772.5" stroke="#bccadb" stroke-width="1"/>
<text x="305.1" y="769.5" font-family='"Liberation Sans", sans-serif' font-size="10.6" fill="#b2bece">27. 十月</text>
<line x1="429.8" y1="755" x2="429.8" y2="772.5" stroke="#bccadb" stroke-width="1"/>
<text x="434.2" y="769.5" font-family='"Liberation Sans", sans-serif' font-size="10.6" fill="#b2bece">3. 十一月</text>
<line x1="558.9" y1="755" x2="558.9" y2="772.5" stroke="#bccadb" stroke-width="1"/>
<text x="563.3" y="769.5" font-family='"Liberation Sans", sans-serif' font-size="10.6" fill="#b2bece">10. 十一月</text>
<line x1="687.9" y1="755" x2="687.9" y2="772.5" stroke="#bccadb" stroke-width="1"/>
<text x="692.3" y="769.5" font-family='"Liberation Sans", sans-serif' font-size="10.6" fill="#b2bece">17. 十一月</text>
<line x1="817.0" y1="755" x2="817.0" y2="772.5" stroke="#bccadb" stroke-width="1"/>
<text x="821.4" y="769.5" font-family='"Liberation Sans", sans-serif' font-size="10.6" fill="#b2bece">24. 十一月</text>
<line x1="946.1" y1="755" x2="946.1" y2="772.5" stroke="#bccadb" stroke-width="1"/>
<text x="950.5" y="769.5" font-family='"Liberation Sans", sans-serif' font-size="10.6" fill="#b2bece">1. 十二月</text>
<line x1="1075.2" y1="755" x2="1075.2" y2="772.5" stroke="#bccadb" stroke-width="1"/>
<text x="1079.6" y="769.5" font-family='"Liberation Sans", sans-serif' font-size="10.6" fill="#b2bece">8. 十二月</text>
<line x1="1204.2" y1="755" x2="1204.2" y2="772.5" stroke="#bccadb" stroke-width="1"/>
<text x="1208.6" y="769.5" font-family='"Liberation Sans", sans-serif' font-size="10.6" fill="#b2bece">15. 十二月</text>
<line x1="1333.3" y1="755" x2="1333.3" y2="772.5" stroke="#bccadb" stroke-width="1"/>
<text x="1337.7" y="769.5" font-family='"Liberation Sans", sans-serif' font-size="10.6" fill="#b2bece">22. 十二月</text>
<line x1="1462.4" y1="755" x2="1462.4" y2="772.5" stroke="#bccadb" stroke-width="1"/>
<text x="1466.8" y="769.5" font-family='"Liberation Sans", sans-serif' font-size="10.6" fill="#b2bece">29. 十二月</text>
<line x1="1591.4" y1="755" x2="1591.4" y2="772.5" stroke="#bccadb" stroke-width="1"/>
<text x="1595.8" y="769.5" font-family='"Liberation Sans", sans-serif' font-size="10.6" fill="#b2bece">5. 一月</text>
<rect x="21.1" y="756.5" width="7.5" height="13.5" rx="1.5" fill="#f2f2f2" stroke="#a0a0a0" stroke-width="1"/>
<line x1="23.8" y1="759.5" x2="23.8" y2="767" stroke="#555" stroke-width="0.8"/><line x1="25.900000000000002" y1="759.5" x2="25.900000000000002" y2="767" stroke="#555" stroke-width="0.8"/>
<rect x="1625.1" y="756.5" width="7.5" height="13.5" rx="1.5" fill="#f2f2f2" stroke="#a0a0a0" stroke-width="1"/>
<line x1="1627.8" y1="759.5" x2="1627.8" y2="767" stroke="#555" stroke-width="0.8"/><line x1="1629.8999999999999" y1="759.5" x2="1629.8999999999999" y2="767" stroke="#555" stroke-width="0.8"/>
</svg>
<div class="abs" style="left:1636px;top:724px;width:36px;height:36px;border-radius:50%;background:#fff;box-shadow:0 1px 10px rgba(0,0,0,0.07)"></div>
<svg class="abs" style="left:1645px;top:733px" width="20" height="20" viewBox="1645 733 20 20"><path d="M1648.6 736.5 H1661.4" stroke="#333" stroke-width="1.2"/><path d="M1655 748.5 V740.5" stroke="#333" stroke-width="1.4"/><path d="M1652.4 743 L1655 739.8 L1657.6 743 Z" fill="#333"/></svg>
</body></html>
